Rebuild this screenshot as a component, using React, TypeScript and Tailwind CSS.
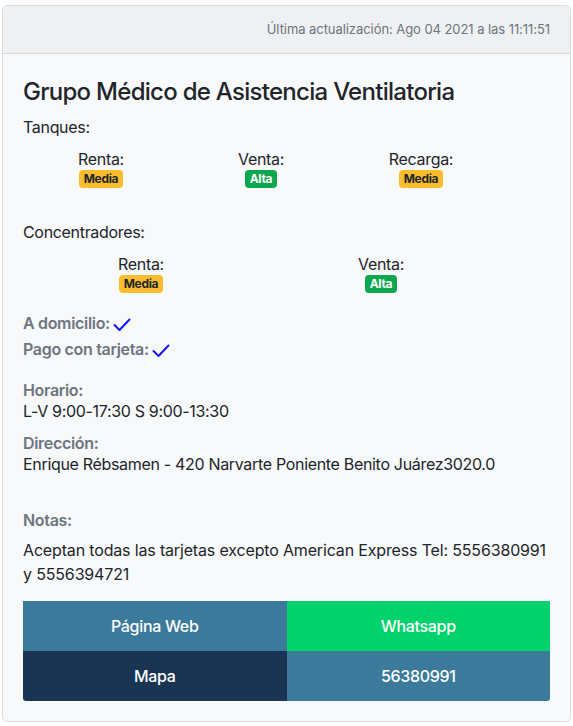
const FONT = { fontFamily: 'Inter, "Liberation Sans", sans-serif' };

type Level = 'Media' | 'Alta';

function Badge({ level }: { level: Level }) {
  const cls = level === 'Alta' ? 'bg-[#0ca64f] text-white' : 'bg-[#fbbd2e] text-[#212529]';
  return (
    <span className={`inline-block rounded-[4px] px-[5px] text-[12px] font-bold leading-[18px] ${cls}`}>{level}</span>
  );
}

function Item({ label, level }: { label: string; level: Level }) {
  return (
    <div className="flex flex-col items-center">
      <span className="text-[16px] leading-[22px] text-[#212529]">{label}</span>
      <Badge level={level} />
    </div>
  );
}

function Check() {
  return (
    <svg width="18" height="14" viewBox="0 0 18 14" className="ml-[3px] mt-[3px] inline-block">
      <path d="M1.5 7 L6.5 12 L16.5 1.5" fill="none" stroke="#1515f5" strokeWidth="2" strokeLinecap="round" strokeLinejoin="round" />
    </svg>
  );
}

export default function App() {
  return (
    <div className="min-h-[726px] bg-white pl-[2px] pr-[2px] pt-[5px] tracking-[-0.02em]" style={FONT}>
      <div className="w-[569px] overflow-hidden rounded-[5px] border border-[#dcdcdc] bg-[#f8f9fa]">
        <div className="flex h-[48px] items-center justify-end border-b border-[#d9d9d9] bg-[#eff0f2] px-[20px] text-[13px] tracking-[-0.005em] text-[#6c757d]">
          Última actualización: Ago 04 2021 a las 11:11:51
        </div>
        <div className="px-[20px] pb-[20px] pt-[23px] text-[#212529]">
          <h1 className="text-[24px] font-medium leading-[29px] tracking-[-0.03em]">Grupo Médico de Asistencia Ventilatoria</h1>
          <div className="mt-[9px] text-[16px] leading-[24px]">Tanques:</div>
          <div className="-ml-[2px] mt-[9px] grid w-[480px] grid-cols-3">
            <Item label="Renta:" level="Media" />
            <Item label="Venta:" level="Alta" />
            <Item label="Recarga:" level="Media" />
          </div>
          <div className="mt-[32px] text-[16px] leading-[24px]">Concentradores:</div>
          <div className="-ml-[2px] mt-[9px] grid w-[480px] grid-cols-2">
            <Item label="Renta:" level="Media" />
            <Item label="Venta:" level="Alta" />
          </div>
          <div className="mt-[17px] flex items-center text-[16px] font-semibold leading-[26px] text-[#6c757d]">
            A domicilio:<Check />
          </div>
          <div className="flex items-center text-[16px] font-semibold leading-[26px] text-[#6c757d]">
            Pago con tarjeta:<Check />
          </div>
          <div className="mt-[18px] text-[16px] font-semibold leading-[21px] text-[#6c757d]">Horario:</div>
          <div className="text-[16px] leading-[21px]">L-V 9:00-17:30 S 9:00-13:30</div>
          <div className="mt-[11px] text-[16px] font-semibold leading-[21px] text-[#6c757d]">Dirección:</div>
          <div className="text-[16px] leading-[21px]">Enrique Rébsamen - 420 Narvarte Poniente Benito Juárez3020.0</div>
          <div className="mt-[35px] text-[16px] font-semibold leading-[21px] text-[#6c757d]">Notas:</div>
          <p className="mt-[7px] text-[16px] leading-[24px] tracking-[-0.01em]">
            Aceptan todas las tarjetas excepto American Express Tel: 5556380991 y 5556394721
          </p>
          <div className="mt-[15px] grid grid-cols-2 overflow-hidden rounded-b-[3px] text-[16px] font-medium text-white">
            <div className="flex h-[50px] items-center justify-center bg-[#3b7a9a]">Página Web</div>
            <div className="flex h-[50px] items-center justify-center bg-[#01d26b]">Whatsapp</div>
            <div className="flex h-[50px] items-center justify-center bg-[#193553]">Mapa</div>
            <div className="flex h-[50px] items-center justify-center bg-[#3b7a9a]">56380991</div>
          </div>
        </div>
      </div>
    </div>
  );
}
